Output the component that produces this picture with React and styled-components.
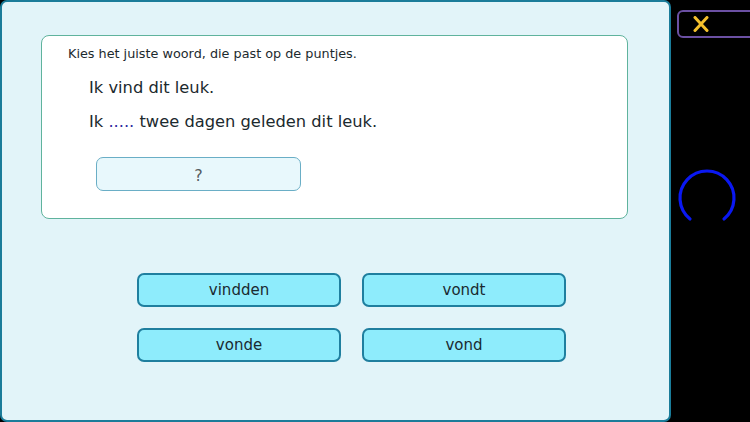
import React from "react";
import styled, { createGlobalStyle } from "styled-components";

const GlobalStyle = createGlobalStyle`
  html, body {
    margin: 0;
    padding: 0;
    background: #000;
  }
  body {
    font-family: "DejaVu Sans", "Noto Sans", sans-serif;
  }
`;

/* Layout */
const Screen = styled.div`
  display: flex;
  width: 750px;
  height: 422px;
  overflow: hidden;
  background: #000;
`;

const Panel = styled.div`
  box-sizing: border-box;
  flex-shrink: 0;
  width: 671px;
  height: 422px;
  background: #e2f4f9;
  border: 2px solid #1a7c9a;
  border-radius: 7px;
  padding: 33px 41px 0 39px;
`;

const Side = styled.div`
  flex: 1;
  display: flex;
  flex-direction: column;
  align-items: flex-start;
  padding: 10px 0 0 6px;
`;

/* Question card */
const Card = styled.div`
  box-sizing: border-box;
  height: 184px;
  background: #fff;
  border: 1px solid #5fb39d;
  border-radius: 8px;
  padding: 9px 0 0 26px;
`;

const Instruction = styled.p`
  margin: 0;
  font-size: 12.8px;
  color: #1c2a2e;
  line-height: 18px;
`;

const Sentence = styled.p`
  margin: ${(p) => (p.$first ? "14px" : "12px")} 0 0 21px;
  font-size: 16.3px;
  color: #1c2a2e;
  line-height: 22px;
`;

const Dots = styled.span`
  color: #2c2aa0;
`;

const AnswerBox = styled.div`
  box-sizing: border-box;
  width: 205px;
  height: 34px;
  margin: 24px 0 0 28px;
  padding-top: 3px;
  background: #e8f8fc;
  border: 1px solid #6aaec6;
  border-radius: 7px;
  display: flex;
  align-items: center;
  justify-content: center;
  font-size: 16px;
  color: #555c60;
`;

/* Options */
const Options = styled.div`
  display: grid;
  grid-template-columns: 204px 204px;
  column-gap: 21px;
  row-gap: 21px;
  margin: 54px 0 0 96px;
`;

const Option = styled.button`
  box-sizing: border-box;
  height: 34px;
  background: #8eecfc;
  border: 2px solid #1f7f9f;
  border-radius: 7px;
  font-family: inherit;
  font-size: 15px;
  color: #1a2a30;
  padding: 0;
  cursor: pointer;
`;

/* Side controls */
const CloseButton = styled.div`
  box-sizing: border-box;
  flex-shrink: 0;
  width: 90px;
  height: 28px;
  border: 2px solid #6b50a3;
  border-radius: 6px;
  display: flex;
  align-items: center;
  padding-left: 14px;
`;

const Spinner = styled.svg`
  margin: 128px 0 0 -1px;
`;

const options = ["vindden", "vondt", "vonde", "vond"];

export default function App() {
  return (
    <Screen>
      <GlobalStyle />
      <Panel>
        <Card>
          <Instruction>Kies het juiste woord, die past op de puntjes.</Instruction>
          <Sentence $first>Ik vind dit leuk.</Sentence>
          <Sentence>
            Ik <Dots>.....</Dots> twee dagen geleden dit leuk.
          </Sentence>
          <AnswerBox>?</AnswerBox>
        </Card>
        <Options>
          {options.map((o) => (
            <Option key={o}>{o}</Option>
          ))}
        </Options>
      </Panel>
      <Side>
        <CloseButton>
          <svg width="16" height="16" viewBox="0 0 16 16">
            <path
              d="M2 1.5 L14 14.5 M14 1.5 L2 14.5"
              stroke="#f4c02c"
              strokeWidth="3"
              strokeLinecap="round"
              fill="none"
            />
          </svg>
        </CloseButton>
        <Spinner width="62" height="62" viewBox="0 0 62 62">
          <path
            d="M14 53 A27 27 0 1 1 48 53"
            stroke="#0a18f2"
            strokeWidth="3.2"
            strokeLinecap="round"
            fill="none"
          />
        </Spinner>
      </Side>
    </Screen>
  );
}
